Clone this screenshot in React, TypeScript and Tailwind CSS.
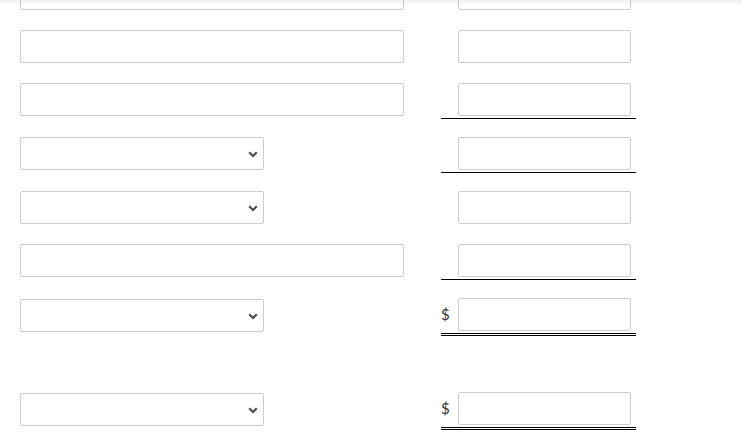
import React from "react";

const inputCls =
  "block h-[33px] rounded-[2px] border border-[#cccccc] bg-white";

function Chevron() {
  return (
    <svg
      className="absolute right-[5px] top-[13px]"
      width="10"
      height="7"
      viewBox="0 0 10 7"
      fill="none"
    >
      <path d="M1.2 1.3 L5 5 L8.8 1.3" stroke="#4a4a4a" strokeWidth="2.2" />
    </svg>
  );
}

function Select({ shift }: { shift?: boolean }) {
  return (
    <div className={`relative w-[244px] ${shift ? "mt-[1px]" : ""} ${inputCls}`}>
      <Chevron />
    </div>
  );
}

function Wide() {
  return <div className={`w-[384px] ${inputCls}`} />;
}

type Line = "none" | "single" | "double";

function Right({ line, dollar }: { line: Line; dollar?: boolean }) {
  const border =
    line === "single"
      ? "border-b border-black pb-[2px]"
      : line === "double"
      ? "border-b-[3px] border-double border-black pb-[2px]"
      : "pb-[2px]";
  return (
    <div className={`w-[195px] pr-[5px] ${border}`}>
      <div className="flex items-center">
        <div className="w-[17px] text-[15px] leading-none text-[#333] font-['Lato',_'Liberation_Sans',_sans-serif]">
          {dollar ? "$" : ""}
        </div>
        <div className={`w-[173px] ${inputCls}`} />
      </div>
    </div>
  );
}

function Row({
  h,
  left,
  line,
  dollar,
}: {
  h: string;
  left: React.ReactNode;
  line: Line;
  dollar?: boolean;
}) {
  return (
    <div className={`flex items-start ${h}`}>
      <div className="w-[441px] pl-[20px]">{left}</div>
      <Right line={line} dollar={dollar} />
    </div>
  );
}

export default function App() {
  return (
    <div className="relative w-[742px] h-[448px] overflow-hidden bg-white font-['Lato',_'Liberation_Sans',_sans-serif]">
      <div className="flex flex-col mt-[-23px]">
        <Row h="h-[53px]" left={<Wide />} line="none" />
        <Row h="h-[53px]" left={<Wide />} line="none" />
        <Row h="h-[54px]" left={<Wide />} line="single" />
        <Row h="h-[54px]" left={<Select />} line="single" />
        <Row h="h-[53px]" left={<Select />} line="none" />
        <Row h="h-[54px]" left={<Wide />} line="single" />
        <Row h="h-[94px]" left={<Select shift />} line="double" dollar />
        <Row h="h-[54px]" left={<Select shift />} line="double" dollar />
      </div>
      <div className="pointer-events-none absolute inset-x-0 top-0 h-[6px] bg-gradient-to-b from-[rgba(0,0,0,0.06)] to-transparent" />
    </div>
  );
}
